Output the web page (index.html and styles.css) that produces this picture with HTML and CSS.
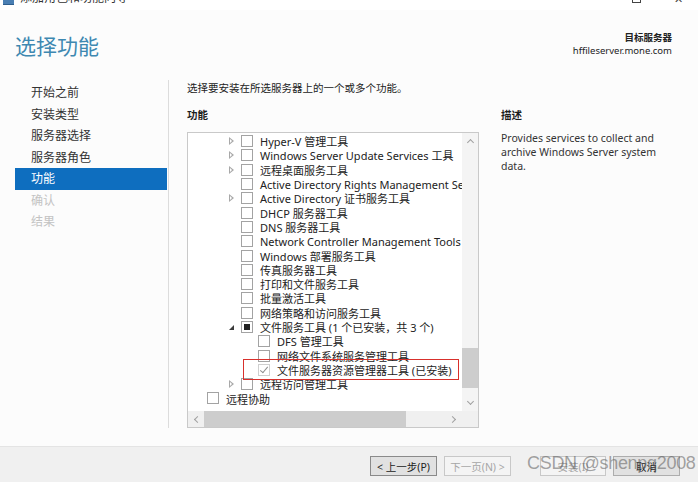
FILE: index.html
```html
<!DOCTYPE html>
<html lang="zh-CN">
<head>
    <meta charset="UTF-8">
    <title>添加角色和功能向导</title>
    <link rel="stylesheet" href="styles.css">
</head>
<body>
    <div class="window">
        <div class="titlebar">
            <span class="app-icon"></span>
            <span class="app-title">添加角色和功能向导</span>
            <span class="win-btn max"></span>
            <span class="win-btn close">✕</span>
        </div>

        <div class="header">
            <h1>选择功能</h1>
            <div class="target">
                <div class="target-label">目标服务器</div>
                <div>hffileserver.mone.com</div>
            </div>
        </div>

        <div class="main">
            <ul class="nav">
                <li>开始之前</li>
                <li>安装类型</li>
                <li>服务器选择</li>
                <li>服务器角色</li>
                <li class="active">功能</li>
                <li class="disabled">确认</li>
                <li class="disabled">结果</li>
            </ul>

            <div class="content">
                <p class="intro">选择要安装在所选服务器上的一个或多个功能。</p>
                <div class="columns">
                    <div class="features">
                        <div class="section-title">功能</div>
                        <div class="tree-box">
                            <div class="tree-view">
                                <div class="row l3"><span class="exp closed"></span><span class="cb"></span><span class="lbl">Hyper-V 管理工具</span></div>
                                <div class="row l3"><span class="exp closed"></span><span class="cb"></span><span class="lbl">Windows Server Update Services 工具</span></div>
                                <div class="row l3"><span class="exp closed"></span><span class="cb"></span><span class="lbl">远程桌面服务工具</span></div>
                                <div class="row l3"><span class="exp"></span><span class="cb"></span><span class="lbl">Active Directory Rights Management Services 工具</span></div>
                                <div class="row l3"><span class="exp closed"></span><span class="cb"></span><span class="lbl">Active Directory 证书服务工具</span></div>
                                <div class="row l3"><span class="exp"></span><span class="cb"></span><span class="lbl">DHCP 服务器工具</span></div>
                                <div class="row l3"><span class="exp"></span><span class="cb"></span><span class="lbl">DNS 服务器工具</span></div>
                                <div class="row l3"><span class="exp"></span><span class="cb"></span><span class="lbl">Network Controller Management Tools</span></div>
                                <div class="row l3"><span class="exp"></span><span class="cb"></span><span class="lbl">Windows 部署服务工具</span></div>
                                <div class="row l3"><span class="exp"></span><span class="cb"></span><span class="lbl">传真服务器工具</span></div>
                                <div class="row l3"><span class="exp"></span><span class="cb"></span><span class="lbl">打印和文件服务工具</span></div>
                                <div class="row l3"><span class="exp"></span><span class="cb"></span><span class="lbl">批量激活工具</span></div>
                                <div class="row l3"><span class="exp"></span><span class="cb"></span><span class="lbl">网络策略和访问服务工具</span></div>
                                <div class="row l3"><span class="exp open"></span><span class="cb partial"></span><span class="lbl">文件服务工具 (1 个已安装，共 3 个)</span></div>
                                <div class="row l4"><span class="exp"></span><span class="cb"></span><span class="lbl">DFS 管理工具</span></div>
                                <div class="row l4"><span class="exp"></span><span class="cb"></span><span class="lbl">网络文件系统服务管理工具</span></div>
                                <div class="row l4"><span class="exp"></span><span class="cb checked"></span><span class="lbl">文件服务器资源管理器工具 (已安装)</span></div>
                                <div class="row l3"><span class="exp closed"></span><span class="cb"></span><span class="lbl">远程访问管理工具</span></div>
                                <div class="row l1"><span class="exp"></span><span class="cb"></span><span class="lbl">远程协助</span></div>
                            </div>
                            <div class="vscroll">
                                <span class="arrow up"></span>
                                <div class="track"><span class="thumb"></span></div>
                                <span class="arrow down"></span>
                            </div>
                            <div class="hscroll">
                                <span class="arrow left"></span>
                                <div class="track"><span class="thumb"></span></div>
                                <span class="arrow right"></span>
                            </div>
                            <div class="corner"></div>
                            <div class="mark"></div>
                        </div>
                    </div>

                    <div class="desc">
                        <div class="section-title">描述</div>
                        <p>Provides services to collect and archive Windows Server system data.</p>
                    </div>
                </div>
            </div>
        </div>

        <div class="footer">
            <button class="btn focus">&lt; 上一步(P)</button>
            <button class="btn" disabled>下一页(N) &gt;</button>
            <button class="btn install" disabled>安装(I)</button>
            <button class="btn">取消</button>
            <span class="watermark">CSDN @shenpq2008</span>
        </div>
    </div>
</body>
</html>
```

FILE: styles.css
```css
* {
    box-sizing: border-box;
}

body {
    margin: 0;
    font-family: "Noto Sans", "Noto Sans CJK SC", sans-serif;
    color: #1e1e1e;
    background-color: #fcfcfc;
}

.window {
    width: 698px;
    height: 482px;
    overflow: hidden;
    position: relative;
}

/* title bar, cut off at the top of the shot */
.titlebar {
    height: 10px;
    background-color: #fff;
    display: flex;
    align-items: flex-start;
    padding-left: 3px;
    overflow: hidden;
    position: relative;
}

.app-icon {
    width: 11px;
    height: 5px;
    background-color: #4a7fb3;
    border-bottom: 1px solid #2f5f8f;
}

.app-title {
    font-size: 12px;
    line-height: 12px;
    margin-left: 6px;
    margin-top: -8px;
    color: #333;
}

.win-btn {
    position: absolute;
    font-size: 11px;
    line-height: 11px;
    color: #444;
}

.win-btn.max {
    left: 632px;
    top: -6px;
    width: 9px;
    height: 9px;
    border: 1px solid #444;
}

.win-btn.close {
    left: 674px;
    top: -7px;
}

.header {
    height: 70px;
    display: flex;
    justify-content: space-between;
    padding: 0 26px 0 15px;
}

.header h1 {
    margin: 23px 0 0;
    font-size: 21px;
    line-height: 26px;
    font-weight: normal;
    color: #3e88b1;
}

.target {
    margin-top: 21px;
    font-size: 9.5px;
    line-height: 13px;
    text-align: right;
    color: #222;
}

.target-label {
    font-weight: bold;
}

.main {
    height: 348px;
    display: flex;
}

.nav {
    list-style: none;
    margin: 0 0 0 15px;
    padding: 2px 0 0;
    width: 154px;
    border-right: 1px solid #dcdcdc;
}

.nav li {
    width: 152px;
    height: 21.5px;
    line-height: 21.5px;
    padding-left: 16px;
    font-size: 12px;
    color: #333;
}

.nav li.active {
    background-color: #0e6ebf;
    color: #fff;
}

.nav li.disabled {
    color: #c3c3c3;
}

.content {
    padding-left: 18px;
    flex: 1;
}

.intro {
    margin: 1px 0 0;
    font-size: 10.5px;
    line-height: 14px;
    color: #222;
}

.columns {
    display: flex;
}

.section-title {
    margin-top: 13px;
    font-size: 10.5px;
    line-height: 14px;
    font-weight: bold;
}

.tree-box {
    margin-top: 10px;
    width: 292px;
    height: 296px;
    border: 1px solid #c9c9c9;
    background-color: #fff;
    display: grid;
    grid-template-columns: 1fr 16px;
    grid-template-rows: 1fr 16px;
    position: relative;
}

.tree-view {
    overflow: hidden;
    padding-top: 1px;
}

.row {
    height: 14.3px;
    display: flex;
    align-items: center;
    white-space: nowrap;
    font-size: 11px;
    color: #222;
}

.row.l1 { padding-left: 3px; }
.row.l3 { padding-left: 37px; }
.row.l4 { padding-left: 54px; }

.exp {
    flex: none;
    width: 16px;
    height: 12px;
    position: relative;
}

.exp.closed::before {
    content: "";
    position: absolute;
    left: 4px;
    top: 2px;
    border-left: 5px solid #a8a8a8;
    border-top: 4px solid transparent;
    border-bottom: 4px solid transparent;
}

.exp.closed::after {
    content: "";
    position: absolute;
    left: 5px;
    top: 4px;
    border-left: 2px solid #fff;
    border-top: 2px solid transparent;
    border-bottom: 2px solid transparent;
}

.exp.open::before {
    content: "";
    position: absolute;
    left: 4px;
    top: 4px;
    border-right: 5px solid #3c3c3c;
    border-top: 5px solid transparent;
}

.cb {
    flex: none;
    width: 12px;
    height: 12px;
    border: 1px solid #a3a3a3;
    background-color: #fff;
    position: relative;
}

.cb.partial::after {
    content: "";
    position: absolute;
    left: 2px;
    top: 2px;
    width: 6px;
    height: 6px;
    background-color: #222;
}

.cb.checked {
    border-color: #cfcfcf;
}

.cb.checked::after {
    content: "";
    position: absolute;
    left: 3px;
    top: 0;
    width: 3px;
    height: 7px;
    border-right: 1.5px solid #8d8d8d;
    border-bottom: 1.5px solid #8d8d8d;
    transform: rotate(40deg);
}

.lbl {
    margin-left: 7px;
}

.vscroll {
    display: flex;
    flex-direction: column;
    background-color: #f4f4f4;
}

.vscroll .track {
    flex: 1;
}

.vscroll .thumb {
    display: block;
    margin-top: 199px;
    height: 40px;
    background-color: #cdcdcd;
}

.hscroll {
    display: flex;
    background-color: #f0f0f0;
}

.hscroll .track {
    flex: 1;
}

.hscroll .thumb {
    display: block;
    width: 202px;
    height: 100%;
    background-color: #cdcdcd;
}

.corner {
    background-color: #f0f0f0;
}

.arrow {
    flex: none;
    width: 16px;
    height: 16px;
    position: relative;
}

.arrow::before {
    content: "";
    position: absolute;
    width: 4px;
    height: 4px;
    border-left: 1px solid #a0a0a0;
    border-top: 1px solid #a0a0a0;
}

.arrow.up::before { left: 6px; top: 7px; transform: rotate(45deg); }
.arrow.down::before { left: 6px; top: 4px; transform: rotate(225deg); }
.arrow.left::before { left: 7px; top: 6px; transform: rotate(-45deg); }
.arrow.right::before { left: 4px; top: 6px; transform: rotate(135deg); }

/* red annotation box drawn over the list */
.mark {
    position: absolute;
    left: 55px;
    top: 226px;
    width: 216px;
    height: 21px;
    border: 1.5px solid #d8302c;
}

.desc {
    margin-left: 22px;
    width: 170px;
}

.desc p {
    margin: 9px 0 0;
    font-size: 10.5px;
    line-height: 14px;
    color: #333;
}

.footer {
    margin-top: 18px;
    height: 36px;
    background-color: #f0f0f0;
    border-top: 1px solid #e4e4e4;
    display: flex;
    justify-content: flex-end;
    align-items: flex-start;
    padding: 9px 18px 0 0;
    position: relative;
}

.btn {
    width: 67px;
    height: 20px;
    margin-left: 7px;
    padding: 0;
    font-family: "Noto Sans", "Noto Sans CJK SC", sans-serif;
    font-size: 10.5px;
    color: #222;
    background-color: #e1e1e1;
    border: 1px solid #adadad;
}

.btn.focus {
    border-color: #8a8a8a;
}

.btn:disabled {
    color: #a6a6a6;
    background-color: #f4f4f4;
    border-color: #c8c8c8;
}

.btn.install {
    margin-left: 29px;
    width: 66px;
}

.watermark {
    position: absolute;
    left: 527px;
    top: 6px;
    font-family: "Liberation Sans", "Noto Sans", sans-serif;
    font-size: 18px;
    color: rgba(90, 90, 90, 0.55);
    letter-spacing: -0.3px;
}
```
